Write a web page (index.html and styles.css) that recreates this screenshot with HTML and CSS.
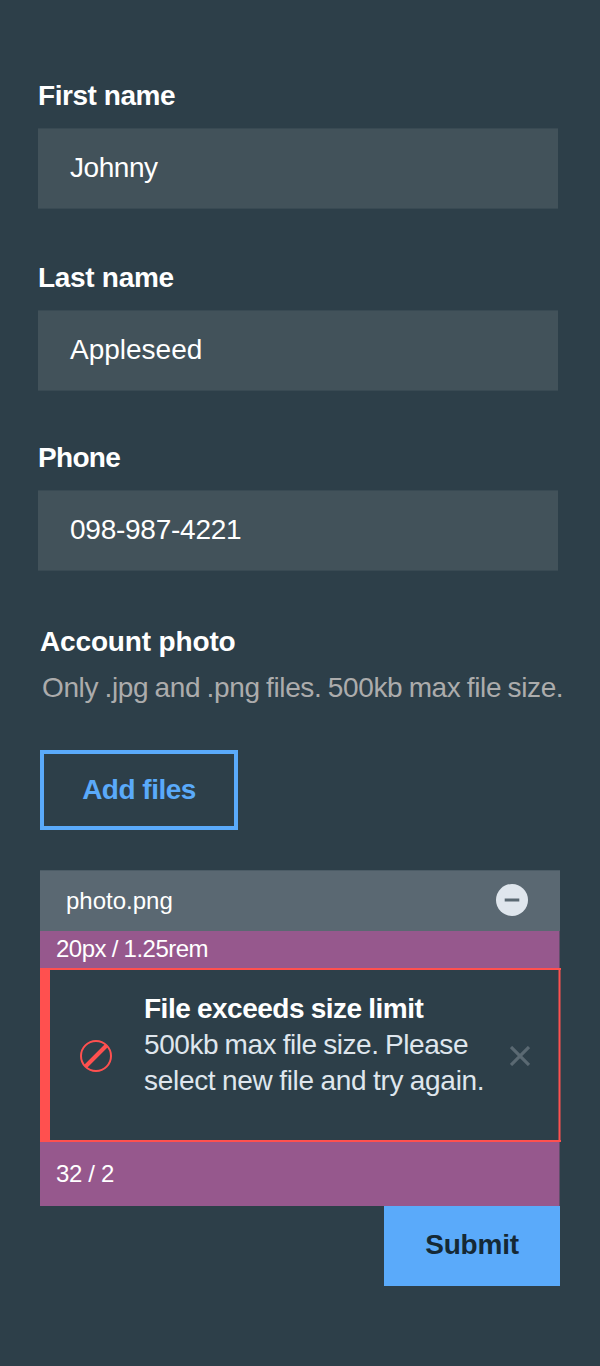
FILE: index.html
```
<!DOCTYPE html>
<html lang="en">
<head>
<meta charset="utf-8">
<title>Account form</title>
<link rel="stylesheet" href="styles.css">
</head>
<body>
<form class="form">
  <div class="field">
    <label class="label"><span class="t-first">First name</span></label>
    <div class="input"><span class="t-johnny">Johnny</span></div>
  </div>
  <div class="field field-last">
    <label class="label"><span class="t-last">Last name</span></label>
    <div class="input"><span class="t-apple">Appleseed</span></div>
  </div>
  <div class="field field-phone">
    <label class="label"><span class="t-phone">Phone</span></label>
    <div class="input"><span class="t-number">098-987-4221</span></div>
  </div>
  <section class="upload">
    <div class="label"><span class="t-account">Account photo</span></div>
    <p class="hint"><span class="t-hint">Only .jpg and .png files. 500kb max file size.</span></p>
    <div class="add"><span class="t-add">Add files</span></div>
    <div class="file">
      <span class="t-file">photo.png</span>
      <svg class="remove" width="32" height="32" viewBox="0 0 32 32"><circle cx="16" cy="16" r="16" fill="#dfe6ed"/><path d="M8.7 16H23.3" stroke="#5a6972" stroke-width="3"/></svg>
    </div>
    <div class="space space-sm"><span class="t-sm">20px / 1.25rem</span></div>
    <div class="alert">
      <svg class="blocked" width="32" height="32" viewBox="0 0 32 32" fill="none" stroke="#ff504f"><circle cx="16" cy="16" r="15" stroke-width="2"/><path d="M5.5 26.5L26.5 5.5" stroke-width="4"/></svg>
      <div class="message">
        <strong class="title"><span class="t-title">File exceeds size limit</span></strong>
        <div><span class="t-msg1">500kb max file size. Please</span></div>
        <div><span class="t-msg2">select new file and try again.</span></div>
      </div>
      <svg class="close" width="20" height="20" viewBox="0 0 20 20" stroke="#5a6972" stroke-width="3.2"><path d="M1 1L19 19M19 1L1 19"/></svg>
    </div>
    <div class="space space-lg"><span class="t-lg">32 / 2</span></div>
    <div class="submit"><span class="t-submit">Submit</span></div>
  </section>
</form>
</body>
</html>
```
FILE: styles.css
```
* { box-sizing: border-box; }
body {
  margin: 0;
  background: #2d3f49;
  color: #fff;
  font: 28px/36px "Liberation Sans", Arial, sans-serif;
}
.form { width: 600px; height: 1366px; padding: 78px 0 0 38px; overflow: hidden; }
.field { width: 520px; }
.field-last { margin-top: 51px; }
.field-phone { margin-top: 49px; }
.label { display: block; height: 36px; font-weight: bold; white-space: nowrap; }
.input {
  height: 81px;
  margin-top: 14px;
  padding: 21px 0 0 32px;
  background: #42525a;
  border: solid #394a53;
  border-width: 1px 0;
}
.upload { display: flex; flex-direction: column; width: 560px; margin-top: 53px; padding-left: 2px; white-space: nowrap; }
.hint { margin: 10px 0 0 2px; color: #acacac; }
.add {
  display: flex;
  align-items: center;
  justify-content: center;
  width: 198px;
  height: 80px;
  margin-top: 44px;
  border: 4px solid #5aaafa;
  color: #5aaafa;
  font-weight: bold;
}
.file {
  display: flex;
  align-items: center;
  justify-content: space-between;
  width: 520px;
  height: 61px;
  margin-top: 40px;
  padding: 0 32px 0 26px;
  background: #5a6872;
  border-top: 1px solid #4c5c66;
  font-size: 24px;
}
.remove { margin-bottom: 3px; }
.space {
  display: flex;
  align-items: center;
  width: 520px;
  padding-left: 16px;
  background: #96588d;
  border-right: 1px solid #624c6b;
  font-size: 24px;
}
.space-sm { height: 37px; padding-bottom: 2px; }
.space-lg { height: 64px; }
.alert {
  display: flex;
  width: 521px;
  height: 174px;
  border: 2px solid #ff504f;
  border-left-width: 10px;
  border-right: 0;
  background: linear-gradient(to right, #96484c 1px, #ff504f 1px 2px, #96484c 2px) right / 3px 100% no-repeat;
}
.blocked { flex: none; margin: 70px 0 0 30px; }
.message { width: 342px; margin: 21px 0 0 32px; color: #dfe6ed; }
.title { display: block; color: #fff; }
.close { flex: none; margin: 76px 0 0 24px; }
.submit {
  display: flex;
  align-items: center;
  justify-content: center;
  width: 176px;
  height: 80px;
  margin-left: 344px;
  padding-bottom: 2px;
  background: #5aaafa;
  color: #152935;
  font-weight: bold;
}

/* Tracking */
.t-first { letter-spacing: -0.45px; }
.t-last { letter-spacing: -0.3px; }
.t-phone { letter-spacing: -0.7px; }
.t-johnny { letter-spacing: -0.45px; }
.t-number { letter-spacing: -0.25px; }
.t-account { letter-spacing: -0.15px; }
.t-hint { letter-spacing: -0.37px; word-spacing: -1px; }
.t-add { letter-spacing: -0.5px; }
.t-sm { letter-spacing: -0.5px; word-spacing: -0.5px; }
.t-title { letter-spacing: -0.5px; word-spacing: -0.6px; }
.t-msg1 { letter-spacing: -0.43px; word-spacing: -0.9px; }
.t-msg2 { letter-spacing: -0.3px; word-spacing: -0.8px; }
.t-lg { letter-spacing: -0.35px; }
.t-submit { letter-spacing: -0.2px; }
```
